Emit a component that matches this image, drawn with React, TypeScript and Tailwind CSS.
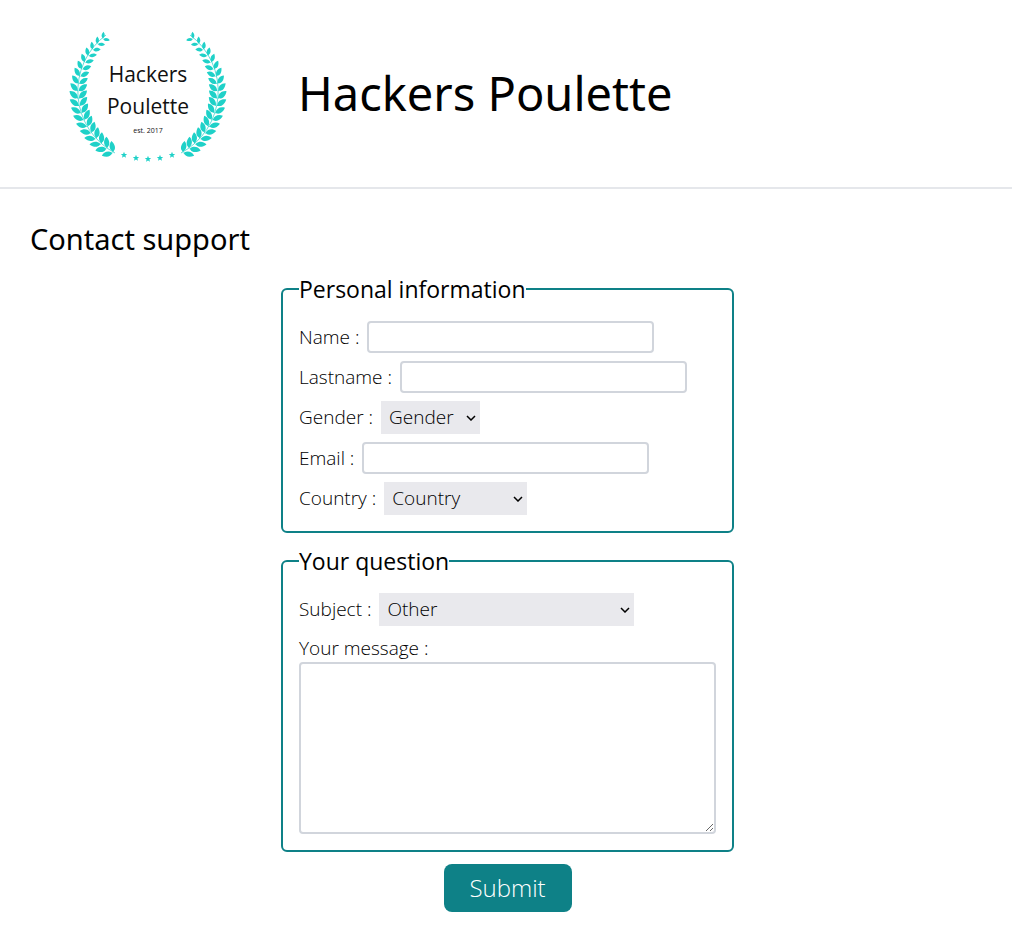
import type { ReactNode } from "react";

const TEAL = "#1fd1c8";

type Leaf = { x: number; y: number; angle: number; size: number };

const LEAF_PAIRS = 19;
const leaves: Leaf[] = [];
for (let i = 0; i < LEAF_PAIRS; i++) {
  const t = i / (LEAF_PAIRS - 1);
  const theta = ((-60 + 110 * t) * Math.PI) / 180;
  const r = 69 + 1.5 * t;
  const x = 88 - r * Math.cos(theta);
  const y = 73 - r * Math.sin(theta);
  const heading = (Math.atan2(-Math.cos(theta), Math.sin(theta)) * 180) / Math.PI;
  const size = t < 0.5 ? 1 : 1 - (t - 0.5) * 0.8;
  leaves.push({ x, y, angle: heading - 40, size });
  leaves.push({ x, y, angle: heading + 46, size });
}

function Branch() {
  return (
    <g>
      <path d="M55 133 A70 70 0 0 1 46 15" fill="none" stroke={TEAL} strokeWidth="0.7" />
      {leaves.map((leaf, i) => (
        <path
          key={i}
          d="M0.5 0 L1.6 -0.6 C3.6 -3.6 8 -3.6 12 -0.8 C9 3 4.5 3.2 1.6 0.6 Z"
          fill={TEAL}
          transform={`translate(${leaf.x} ${leaf.y}) rotate(${leaf.angle}) scale(${leaf.size} ${i % 2 ? -leaf.size : leaf.size})`}
        />
      ))}
    </g>
  );
}

const stars = [
  [64, 135],
  [76, 138],
  [88, 139],
  [100, 138],
  [112, 135],
];

function Logo() {
  return (
    <svg width="180" height="147" viewBox="0 0 180 147" role="img" aria-label="Hackers Poulette logo" className="shrink-0">
      <Branch />
      <g transform="translate(176 0) scale(-1 1)">
        <Branch />
      </g>
      {stars.map(([x, y]) => (
        <path
          key={x}
          d="M0 -3.3 L0.9 -1.1 L3.2 -1 L1.4 0.6 L2 2.8 L0 1.6 L-2 2.8 L-1.4 0.6 L-3.2 -1 L-0.9 -1.1 Z"
          fill={TEAL}
          transform={`translate(${x} ${y})`}
        />
      ))}
      <g textAnchor="middle" fill="#111111" className="font-['Open_Sans','Noto_Sans',sans-serif]">
        <text x="88" y="62" fontSize="21" fontWeight="400">Hackers</text>
        <text x="88" y="94" fontSize="21" fontWeight="400">Poulette</text>
        <text x="88" y="113" fontSize="7" fontWeight="400">est. 2017</text>
      </g>
    </svg>
  );
}

function Row({ id, label, children }: { id: string; label: string; children: ReactNode }) {
  return (
    <div className="flex items-center gap-2">
      <label htmlFor={id}>{label}</label>
      {children}
    </div>
  );
}

function TextField({ id, type = "text" }: { id: string; type?: string }) {
  return (
    <input id={id} name={id} type={type} className="h-8 w-[287px] min-w-0 rounded border-2 border-gray-300 bg-white px-2" />
  );
}

function SelectField({ id, options, width }: { id: string; options: string[]; width: string }) {
  return (
    <span className={`relative flex ${width}`}>
      <select id={id} name={id} className="h-[33px] w-full appearance-none bg-[#e9e9ed] pl-2 pr-5">
        {options.map((option) => (
          <option key={option}>{option}</option>
        ))}
      </select>
      <svg width="10" height="6" viewBox="0 0 10 6" className="pointer-events-none absolute right-1 top-3.5" aria-hidden="true">
        <path d="M1 1 L5 5 L9 1" fill="none" stroke="#000" strokeWidth="1.5" />
      </svg>
    </span>
  );
}

function Panel({ title, children }: { title: string; children: ReactNode }) {
  return (
    <fieldset className="w-full min-w-0 rounded-md border-2 border-[#0e8187] px-4 pb-4 pt-3.5">
      <legend className="text-[23px] leading-9 font-normal">{title}</legend>
      {children}
    </fieldset>
  );
}

export default function App() {
  return (
    <div className="bg-white pb-9 font-['Open_Sans','Noto_Sans',sans-serif] text-[19px] font-light text-black">
      <header className="flex items-center gap-[58px] border-b-2 border-gray-200 pb-5 pl-[60px] pt-5">
        <Logo />
        <h1 className="font-['Noto_Sans',sans-serif] text-[47px] font-normal leading-none">Hackers Poulette</h1>
      </header>
      <main className="pl-[30px] pr-[27px] pt-8">
        <h2 className="font-['Noto_Sans',sans-serif] text-[29px] font-normal leading-9">Contact support</h2>
        <form className="mx-auto mt-3.5 flex max-w-[453px] flex-col items-center" onSubmit={(e) => e.preventDefault()}>
          <Panel title="Personal information">
            <div className="flex flex-col gap-2">
              <Row id="name" label="Name :">
                <TextField id="name" />
              </Row>
              <Row id="lastname" label="Lastname :">
                <TextField id="lastname" />
              </Row>
              <Row id="gender" label="Gender :">
                <SelectField id="gender" width="w-[99px]" options={["Gender"]} />
              </Row>
              <Row id="email" label="Email :">
                <TextField id="email" type="email" />
              </Row>
              <Row id="country" label="Country :">
                <SelectField id="country" width="w-[143px]" options={["Country"]} />
              </Row>
            </div>
          </Panel>
          <div className="mt-2.5 w-full">
            <Panel title="Your question">
              <div className="flex flex-col gap-2">
                <Row id="subject" label="Subject :">
                  <SelectField id="subject" width="w-[255px]" options={["Other"]} />
                </Row>
                <div className="flex flex-col">
                  <label htmlFor="message" className="leading-7">Your message :</label>
                  <textarea id="message" name="message" className="h-[172px] w-full resize rounded border-2 border-gray-300 bg-white p-2" />
                </div>
              </div>
            </Panel>
          </div>
          <button type="submit" className="mt-3 h-12 w-32 rounded-lg bg-[#0e8187] text-2xl font-light text-white">
            Submit
          </button>
        </form>
      </main>
    </div>
  );
}
